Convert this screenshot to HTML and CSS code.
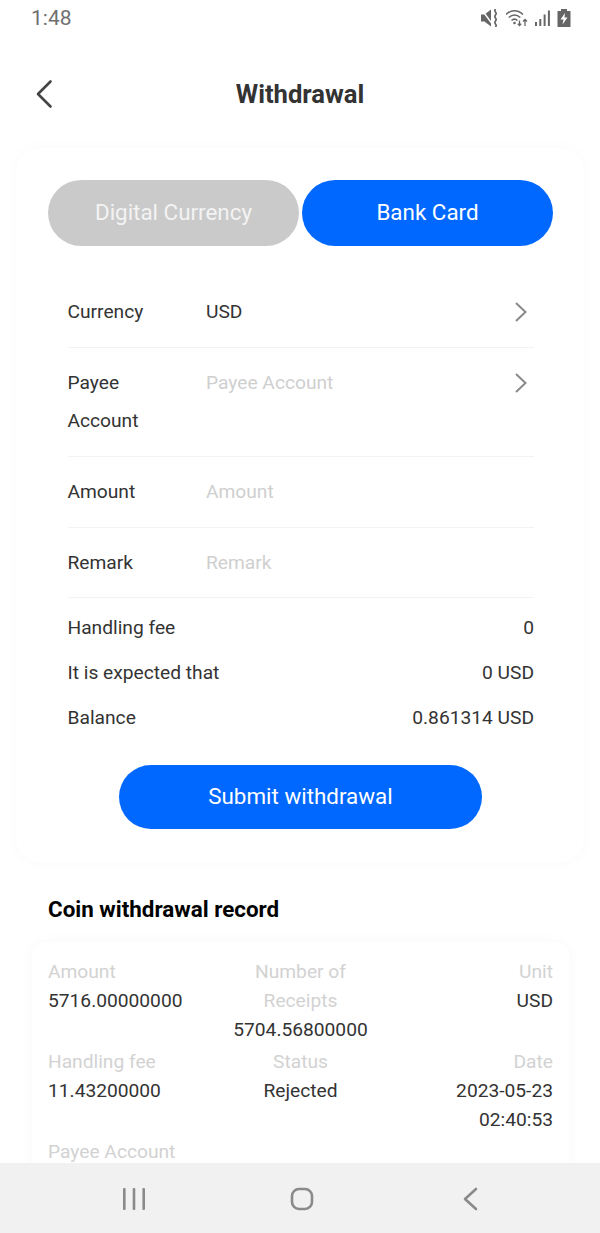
FILE: index.html
```html
<!DOCTYPE html>
<html lang="en">
<head>
    <meta charset="UTF-8">
    <meta name="viewport" content="width=device-width, initial-scale=1.0">
    <title>Withdrawal</title>
    <link rel="stylesheet" href="styles.css">
</head>
<body>
    <div class="phone">
        <div class="status-bar">
            <span class="status-time">1:48</span>
            <div class="status-icons">
                <svg width="18" height="18" viewBox="0 0 18 18"><path d="M0 5.500h3.500L10 .500v17l-6.500-5H0z" fill="#666"/><path d="M1 1l11 15" stroke="#fff" stroke-width="1.400"/><path d="M14.500 0c-2.500 3 2.500 3 0 6s2.500 3 0 6 2.500 3 0 6" fill="none" stroke="#666" stroke-width="1.700"/></svg>
                <svg width="22" height="18" viewBox="0 0 22 18" fill="none" stroke="#666" stroke-width="1.500"><path d="M0 5.500C5 .500 12 .500 17 5.500"/><path d="M2.800 8.500c3.500-3.200 8-3.200 11.500 0"/><path d="M5.500 11.500c2-1.800 4-1.800 6 0"/><circle cx="8.500" cy="14" r="1.300" fill="#666" stroke="none"/><path d="M13.500 11.500v5M11.800 14.800l1.700 1.700 1.700-1.700M19 17v-6.500M17 12.500l2-2 2 2" stroke-width="1.300"/></svg>
                <svg width="15" height="18" viewBox="0 0 15 18" fill="#666"><rect x="0" y="13" width="2" height="4"/><rect x="4.300" y="10" width="2" height="7"/><rect x="8.600" y="5.500" width="2" height="11.500"/><rect x="12.900" y="1.500" width="2" height="15.500"/></svg>
                <svg width="14" height="18" viewBox="0 0 14 18"><path d="M4 0h6v2h3.500v16H.500V2H4z" fill="#666"/><path d="M8 4L3.500 10.500h3L5.500 15.500 10.500 8.500H7.500z" fill="#fff"/></svg>
            </div>
        </div>

        <div class="header">
            <svg class="back-icon" width="18" height="30" viewBox="0 0 18 30"><path d="M15.500 2.500L3 15l12.500 12.500" fill="none" stroke="#444" stroke-width="2.600" stroke-linecap="round" stroke-linejoin="round"/></svg>
            <h1>Withdrawal</h1>
        </div>

        <div class="card">
            <div class="tabs">
                <div class="tab tab-off">Digital Currency</div>
                <div class="tab tab-on">Bank Card</div>
            </div>
            <div class="form">
                <div class="row">
                    <span class="row-label">Currency</span>
                    <span class="row-value">USD</span>
                    <svg class="chevron" width="14" height="22" viewBox="0 0 14 22"><path d="M2 2l9.500 9L2 20" fill="none" stroke="#8a8a8a" stroke-width="2"/></svg>
                </div>
                <div class="row">
                    <span class="row-label">Payee Account</span>
                    <span class="row-value placeholder">Payee Account</span>
                    <svg class="chevron" width="14" height="22" viewBox="0 0 14 22"><path d="M2 2l9.500 9L2 20" fill="none" stroke="#8a8a8a" stroke-width="2"/></svg>
                </div>
                <div class="row">
                    <span class="row-label">Amount</span>
                    <span class="row-value placeholder">Amount</span>
                </div>
                <div class="row row-short">
                    <span class="row-label">Remark</span>
                    <span class="row-value placeholder">Remark</span>
                </div>
            </div>
            <div class="summary">
                <div class="summary-row"><span>Handling fee</span><span>0</span></div>
                <div class="summary-row"><span>It is expected that</span><span>0 USD</span></div>
                <div class="summary-row"><span>Balance</span><span>0.861314 USD</span></div>
            </div>
            <div class="submit">Submit withdrawal</div>
        </div>

        <h2 class="record-title">Coin withdrawal record</h2>

        <div class="record">
            <div class="record-grid">
                <div class="cell"><span class="cell-label">Amount</span><span>5716.00000000</span></div>
                <div class="cell cell-center"><span class="cell-label">Number of Receipts</span><span>5704.56800000</span></div>
                <div class="cell cell-right"><span class="cell-label">Unit</span><span>USD</span></div>
                <div class="cell"><span class="cell-label">Handling fee</span><span>11.43200000</span></div>
                <div class="cell cell-center"><span class="cell-label">Status</span><span>Rejected</span></div>
                <div class="cell cell-right"><span class="cell-label">Date</span><span>2023-05-23 02:40:53</span></div>
                <div class="cell"><span class="cell-label">Payee Account</span></div>
            </div>
        </div>

        <div class="nav-bar">
            <svg width="24" height="24" viewBox="0 0 24 24" fill="#8a8a8a"><rect x="1" y="1" width="2.600" height="22" rx="1"/><rect x="10.700" y="1" width="2.600" height="22" rx="1"/><rect x="20.400" y="1" width="2.600" height="22" rx="1"/></svg>
            <svg width="24" height="24" viewBox="0 0 24 24"><rect x="2" y="2" width="20" height="20" rx="7" fill="none" stroke="#8a8a8a" stroke-width="2.600"/></svg>
            <svg width="24" height="24" viewBox="0 0 24 24"><path d="M18 2L7 12l11 10" fill="none" stroke="#8a8a8a" stroke-width="2.600" stroke-linecap="round" stroke-linejoin="round"/></svg>
        </div>
    </div>
</body>
</html>
```

FILE: styles.css
```css
* {
    box-sizing: border-box;
    margin: 0;
    padding: 0;
}

body {
    font-family: Roboto, "Liberation Sans", sans-serif;
    background-color: #fff;
    color: #333;
}

.phone {
    position: relative;
    width: 600px;
    height: 1233px;
    overflow: hidden;
}

.status-bar {
    height: 36px;
    padding: 0 29px 0 31px;
    display: flex;
    align-items: center;
    justify-content: space-between;
}

.status-time {
    font-size: 21px;
    color: #6f6f6f;
}

.status-icons {
    display: flex;
    align-items: center;
    gap: 7px;
}

.header {
    position: relative;
    height: 112px;
    padding-top: 22px;
}

.header h1 {
    font-size: 25.6px;
    font-weight: 700;
    line-height: 72px;
    text-align: center;
    color: #333;
}

.back-icon {
    position: absolute;
    left: 35px;
    top: 43px;
}

.card {
    margin: 0 16px;
    height: 714px;
    padding: 32px 31px 0 32px;
    border-radius: 24px;
    background-color: #fff;
    box-shadow: 0 0 16px rgba(0, 0, 0, 0.025);
}

.tabs {
    display: flex;
    gap: 3px;
    margin-bottom: 31px;
}

.tab {
    flex: 1;
    height: 66px;
    padding-bottom: 2px;
    border-radius: 33px;
    font-size: 22.4px;
    color: #fff;
    display: flex;
    align-items: center;
    justify-content: center;
}

.tab-off {
    background-color: #cacaca;
    color: #f3f3f3;
}

.tab-on {
    background-color: #0068ff;
}

.form {
    margin: 0 19px 0 19.5px;
}

.row {
    display: flex;
    align-items: flex-start;
    padding: 16px 0;
    border-bottom: 1px solid #f3f3f3;
    font-size: 19.2px;
    line-height: 38px;
}

.row-short {
    padding-bottom: 15px;
}

.row-label {
    width: 138.5px;
    padding-right: 48px;
    flex-shrink: 0;
}

.row-value {
    flex: 1;
}

.placeholder {
    color: #cfcfcf;
}

.chevron {
    margin: 8px 6px 0 0;
}

.summary {
    margin: 7px 19px 0 19.5px;
}

.summary-row {
    display: flex;
    justify-content: space-between;
    font-size: 19.2px;
    line-height: 45px;
}

.submit {
    width: 363px;
    height: 64px;
    margin: 25px auto 0;
    padding-bottom: 2px;
    border-radius: 32px;
    background-color: #0068ff;
    color: #fff;
    font-size: 22.4px;
    display: flex;
    align-items: center;
    justify-content: center;
}

.record-title {
    font-size: 22.4px;
    font-weight: 700;
    line-height: 30px;
    color: #000;
    margin: 32px 48px 18px;
}

.record {
    margin: 0 31px 0 32px;
    height: 300px;
    padding: 15px 16px 0;
    border-radius: 14px;
    background-color: #fff;
    box-shadow: 0 0 14px rgba(0, 0, 0, 0.03);
    font-size: 19.2px;
    line-height: 29px;
}

.record-grid {
    display: grid;
    grid-template-columns: 1fr 1fr 1fr;
    row-gap: 3px;
}

.cell {
    display: flex;
    flex-direction: column;
}

.cell-center {
    text-align: center;
}

.cell-right {
    text-align: right;
}

.cell-label {
    color: #d2d2d2;
}

.nav-bar {
    position: absolute;
    left: 0;
    right: 0;
    bottom: 0;
    height: 70px;
    padding: 2px 46px 0 50px;
    background-color: #f1f1f1;
    display: grid;
    grid-template-columns: repeat(3, 168px);
    align-items: center;
    justify-items: center;
}
```
